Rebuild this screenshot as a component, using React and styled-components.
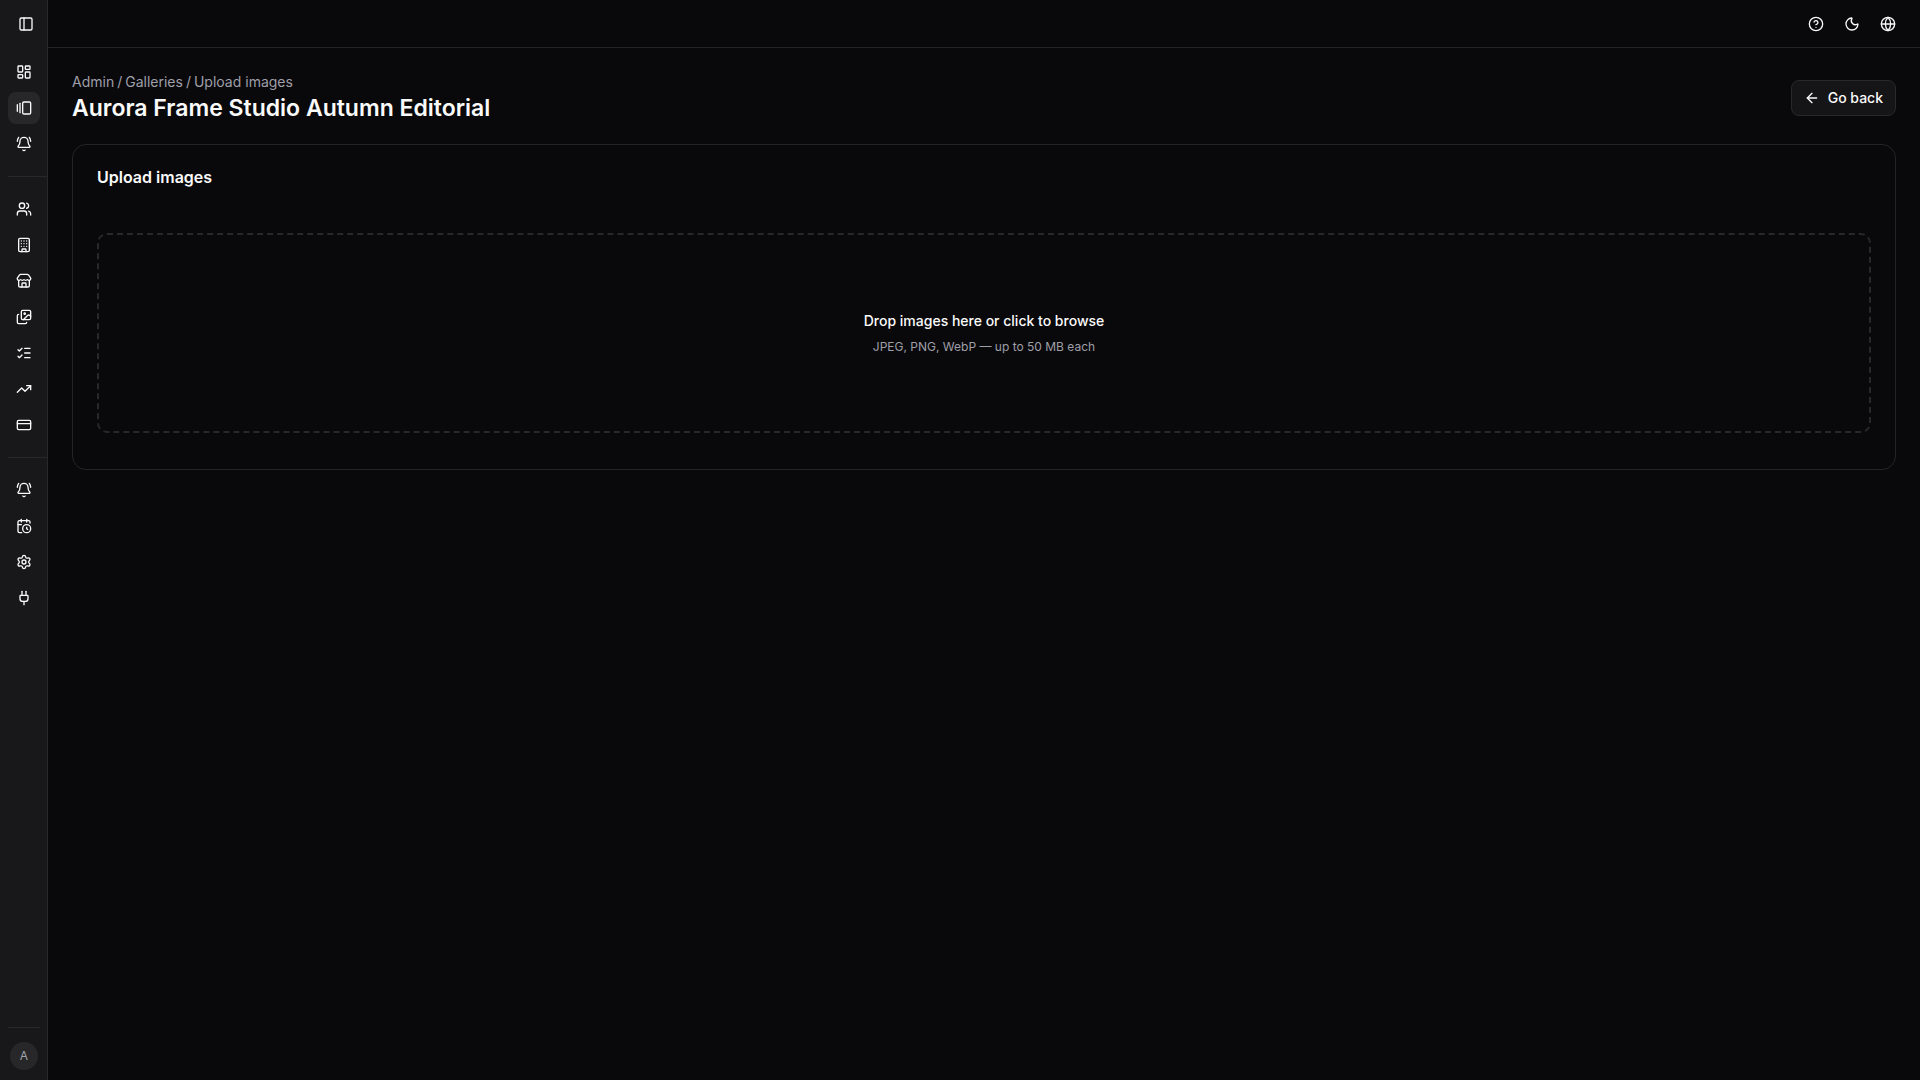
import React from "react";
import styled, { createGlobalStyle } from "styled-components";
import {
  ArrowLeft,
  BellRing,
  Building,
  CalendarClock,
  CircleQuestionMark,
  CreditCard,
  GalleryHorizontalEnd,
  Globe,
  Images,
  LayoutDashboard,
  ListChecks,
  Moon,
  PanelLeft,
  Plug,
  Settings,
  Store,
  TrendingUp,
  Users,
} from "lucide-react";

const GlobalStyle = createGlobalStyle`
  * {
    box-sizing: border-box;
  }
  body {
    margin: 0;
    background-color: #09090b;
    color: #fafafa;
    font-family: Inter, "Liberation Sans", sans-serif;
    font-size: 14px;
    line-height: 20px;
  }
  button {
    font: inherit;
    color: inherit;
    cursor: pointer;
  }
`;

const Layout = styled.div`
  display: flex;
  min-height: 100vh;
`;

const Sidebar = styled.aside`
  display: flex;
  flex-direction: column;
  flex: 0 0 48px;
  background-color: #18181b;
  border-right: 1px solid #28282b;
`;

const SidebarTop = styled.div`
  display: flex;
  justify-content: flex-end;
  align-items: center;
  height: 48px;
  padding-right: 7px;
`;

const NavGroup = styled.nav`
  display: flex;
  flex-direction: column;
  gap: 4px;
  padding: ${(props) => (props.$first ? "8px 7px 16px 8px" : "16px 7px 16px 8px")};
`;

const NavLink = styled.a`
  display: flex;
  align-items: center;
  justify-content: center;
  width: 32px;
  height: 32px;
  border-radius: 8px;
  color: #fafafa;
  background-color: ${(props) => (props.$active ? "#27272a" : "transparent")};
`;

const Divider = styled.div`
  height: 1px;
  margin-left: 8px;
  background-color: #28282b;
`;

const SidebarFooter = styled.div`
  display: flex;
  justify-content: center;
  margin: auto 7px 0 8px;
  padding: 14px 0 10px;
  border-top: 1px solid #28282b;
`;

const Avatar = styled.button`
  width: 28px;
  height: 28px;
  padding: 0;
  border: none;
  border-radius: 50%;
  background-color: #27272a;
  color: #a1a1aa;
  font-size: 12px;
`;

const Content = styled.div`
  display: flex;
  flex-direction: column;
  flex: 1;
  min-width: 0;
`;

const TopBar = styled.header`
  display: flex;
  align-items: center;
  justify-content: flex-end;
  gap: 4px;
  height: 48px;
  padding: 0 16px;
  border-bottom: 1px solid #242427;
`;

const IconButton = styled.button`
  display: flex;
  align-items: center;
  justify-content: center;
  width: ${(props) => (props.$small ? "28px" : "32px")};
  height: ${(props) => (props.$small ? "28px" : "32px")};
  padding: 0;
  border: none;
  border-radius: 8px;
  background: transparent;
`;

const Main = styled.main`
  display: flex;
  flex-direction: column;
  gap: 20px;
  padding: 24px;
`;

const PageHeader = styled.div`
  display: flex;
  align-items: center;
  justify-content: space-between;
`;

const Breadcrumb = styled.nav`
  display: flex;
  gap: 3px;
  color: #9f9fa9;
`;

const Crumb = styled.a`
  color: inherit;
  text-decoration: none;
`;

const PageTitle = styled.h1`
  margin: 0;
  font-size: 23px;
  font-weight: 600;
  line-height: 32px;
`;

const BackButton = styled.button`
  display: flex;
  align-items: center;
  gap: 8px;
  height: 36px;
  padding: 0 12px;
  border: 1px solid #29292c;
  border-radius: 8px;
  background-color: #151518;
  font-weight: 500;
`;

const Card = styled.section`
  padding: 24px;
  border: 1px solid #242427;
  border-radius: 14px;
`;

const CardTitle = styled.h2`
  margin: 0 0 48px;
  font-size: 16px;
  font-weight: 600;
  line-height: 16px;
`;

const DropZone = styled.button`
  display: flex;
  flex-direction: column;
  align-items: center;
  justify-content: center;
  gap: 8px;
  width: 100%;
  min-height: 200px;
  margin-bottom: 12px;
  border: 2px dashed #28282b;
  border-radius: 10px;
  background: transparent;
`;

const DropTitle = styled.span`
  font-weight: 500;
`;

const DropHint = styled.span`
  color: #9f9fa9;
  font-size: 12px;
  line-height: 16px;
`;

const navGroups = [
  [
    { label: "Dashboard", icon: LayoutDashboard },
    { label: "Galleries", icon: GalleryHorizontalEnd, active: true },
    { label: "Alerts", icon: BellRing },
  ],
  [
    { label: "Users", icon: Users },
    { label: "Organizations", icon: Building },
    { label: "Store", icon: Store },
    { label: "Images", icon: Images },
    { label: "Tasks", icon: ListChecks },
    { label: "Analytics", icon: TrendingUp },
    { label: "Billing", icon: CreditCard },
  ],
  [
    { label: "Notifications", icon: BellRing },
    { label: "Schedule", icon: CalendarClock },
    { label: "Settings", icon: Settings },
    { label: "Integrations", icon: Plug },
  ],
];

function App() {
  return (
    <>
      <GlobalStyle />
      <Layout>
        <Sidebar>
          <SidebarTop>
            <IconButton $small aria-label="Toggle sidebar">
              <PanelLeft size={16} />
            </IconButton>
          </SidebarTop>
          {navGroups.map((group, index) => (
            <React.Fragment key={index}>
              {index > 0 && <Divider />}
              <NavGroup $first={index === 0}>
                {group.map(({ label, icon: Icon, active }) => (
                  <NavLink key={label} href="#" aria-label={label} $active={active}>
                    <Icon size={16} />
                  </NavLink>
                ))}
              </NavGroup>
            </React.Fragment>
          ))}
          <SidebarFooter>
            <Avatar aria-label="Account">A</Avatar>
          </SidebarFooter>
        </Sidebar>

        <Content>
          <TopBar>
            <IconButton aria-label="Help">
              <CircleQuestionMark size={16} />
            </IconButton>
            <IconButton aria-label="Theme">
              <Moon size={16} />
            </IconButton>
            <IconButton aria-label="Language">
              <Globe size={16} />
            </IconButton>
          </TopBar>

          <Main>
            <PageHeader>
              <div>
                <Breadcrumb aria-label="Breadcrumb">
                  <Crumb href="#">Admin</Crumb>
                  <span>/</span>
                  <Crumb href="#">Galleries</Crumb>
                  <span>/</span>
                  <span>Upload images</span>
                </Breadcrumb>
                <PageTitle>Aurora Frame Studio Autumn Editorial</PageTitle>
              </div>
              <BackButton>
                <ArrowLeft size={16} />
                Go back
              </BackButton>
            </PageHeader>

            <Card>
              <CardTitle>Upload images</CardTitle>
              <DropZone type="button">
                <DropTitle>Drop images here or click to browse</DropTitle>
                <DropHint>JPEG, PNG, WebP — up to 50 MB each</DropHint>
              </DropZone>
            </Card>
          </Main>
        </Content>
      </Layout>
    </>
  );
}

export default App;
